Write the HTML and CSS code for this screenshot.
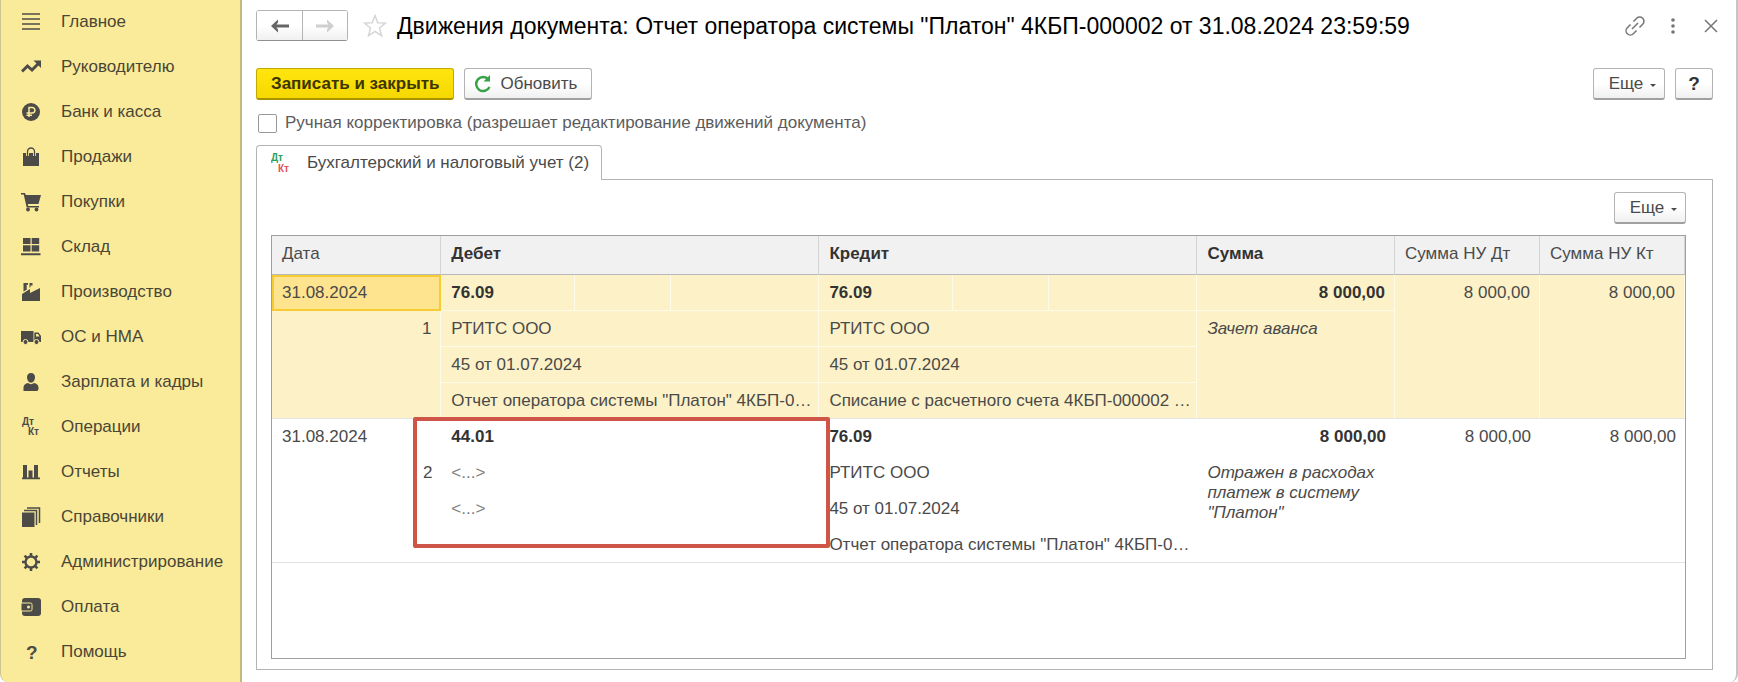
FILE: index.html
```html
<!DOCTYPE html>
<html lang="ru">
<head>
  <meta charset="UTF-8">
  <meta name="viewport" content="width=device-width, initial-scale=1.0">
  <title>Движения документа</title>
  <link rel="stylesheet" href="styles.css">
</head>
<body>

  <nav class="sidebar">
    <a href="#"><svg viewBox="0 0 20 20"><path d="M1 2h18M1 7h18M1 12h18M1 17h18" fill="none" stroke="currentColor" stroke-width="1.3"/></svg>Главное</a>
    <a href="#"><svg viewBox="0 0 20 20"><path d="M1 14.500l5.500-5.500 4.500 4 6-6" fill="none" stroke="currentColor" stroke-width="3"/><path d="M12.500 3.500H20V11z"/></svg>Руководителю</a>
    <a href="#"><svg viewBox="0 0 20 20"><circle cx="10" cy="10" r="9"/><path class="cut" d="M8 15V5.500h3.200a2.700 2.700 0 0 1 0 5.400H5.500M5.500 13.200H11"/></svg>Банк и касса</a>
    <a href="#"><svg viewBox="0 0 20 20"><path d="M2 6h16v13H2z"/><path d="M6.500 9V4.500a3.500 3.500 0 0 1 7 0V9" fill="none" stroke="#faeb9b" stroke-width="3"/><path d="M6.500 9V4.500a3.500 3.500 0 0 1 7 0V9" fill="none" stroke="currentColor" stroke-width="1.300"/></svg>Продажи</a>
    <a href="#"><svg viewBox="0 0 20 20"><path d="M0 1h4l.8 2H20l-2.500 9H6.800l.5 2H18v1.500H5.700L2.700 2.500H0z"/><circle cx="7" cy="17.500" r="1.900"/><circle cx="15.500" cy="17.500" r="1.900"/></svg>Покупки</a>
    <a href="#"><svg viewBox="0 0 20 20"><path d="M2 1h7.500v6H2zM10.700 1h7.500v6h-7.500zM2 8.300h7.500v6.200H2zM10.700 8.300h7.500v6.200h-7.500zM0 16.300h19.500v2H0z"/></svg>Склад</a>
    <a href="#"><svg viewBox="0 0 20 20"><path d="M1 12l8-5v4l10-5v13H1zM2.500 1H7v1.800H5.700v5L2.500 9.500zM8.500 1h3v2.500H9.500V5l-1 .8z"/></svg>Производство</a>
    <a href="#"><svg viewBox="0 0 20 20"><path d="M0 4h12.500v11H0z"/><path d="M13.300 5.500h4.200L20 9v6h-6.700z"/><path d="M15 7h2l1.500 2.500H15z" fill="#faeb9b"/><g stroke="#faeb9b"><circle cx="4.500" cy="15" r="2.500"/><circle cx="15.500" cy="15" r="2.500"/></g></svg>ОС и НМА</a>
    <a href="#"><svg viewBox="0 0 20 20"><path d="M10 1c2.600 0 4 1.900 4 4.300 0 3-1.700 5.400-4 5.400S6 8.300 6 5.300C6 2.900 7.400 1 10 1z"/><path d="M2.500 19v-3.500c0-2.500 2-4 4.500-4.500 1.500 1.500 4.500 1.500 6 0 2.500.5 4.500 2 4.500 4.500V17a2 2 0 0 1-2 2z"/></svg>Зарплата и кадры</a>
    <a href="#"><svg viewBox="0 0 20 20"><text x="1" y="8" class="mini">Дт</text><text x="7" y="18" class="mini">Кт</text></svg>Операции</a>
    <a href="#"><svg viewBox="0 0 20 20"><path d="M2 3h4v13H2zM7.500 8.500h4V16h-4zM13 3h4v13h-4zM1 15.500h18v1.800H1z"/></svg>Отчеты</a>
    <a href="#"><svg viewBox="0 0 20 20"><path d="M1 5.500h12.500V20H1z"/><path d="M3 3.500h12.500V18M6 1h12.500v15" fill="none" stroke="currentColor" stroke-width="1.500"/></svg>Справочники</a>
    <a href="#"><svg viewBox="0 0 20 20"><circle cx="10" cy="10" r="5.500" fill="none" stroke="currentColor" stroke-width="2.400"/><path d="M10 1v3M10 16v3M1 10h3M16 10h3M3.600 3.600l2.200 2.200M14.200 14.200l2.200 2.200M3.600 16.400l2.200-2.200M14.200 5.800l2.200-2.200" stroke="currentColor" stroke-width="2.600"/></svg>Администрирование</a>
    <a href="#"><svg viewBox="0 0 20 20"><rect x="1" y="1" width="19" height="18" rx="3"/><path d="M0 6h9.500a1.500 1.500 0 0 1 1.500 1.500v5A1.500 1.500 0 0 1 9.500 14H0z" stroke="#faeb9b"/><circle cx="7.500" cy="10" r="1.500" fill="#faeb9b"/></svg>Оплата</a>
    <a href="#"><svg viewBox="0 0 20 20"><text x="5" y="17" class="question">?</text></svg>Помощь</a>
  </nav>

  <main class="content">
    <header class="title-bar">
      <div class="history">
        <button type="button" aria-label="Назад"><svg viewBox="0 0 18 14"><path d="M0 7l7-6.500v3L5.500 5.500H18v3H5.500L7 10.500v3z"/></svg></button>
        <button type="button" aria-label="Вперед" disabled><svg viewBox="0 0 18 14"><path d="M18 7l-7-6.500v3l1.500 2H0v3h12.500l-1.500 2v3z"/></svg></button>
      </div>
      <button type="button" class="plain star" aria-label="В избранное"><svg viewBox="0 0 24 24"><path d="M12 1.500l2.800 7.300 7.700.3-6 4.900 2 7.700-6.500-4.300-6.500 4.300 2-7.700-6-4.900 7.700-.3z" fill="none" stroke="currentColor" stroke-width="1.500"/></svg></button>
      <h1>Движения документа: Отчет оператора системы "Платон" 4КБП-000002 от 31.08.2024 23:59:59</h1>
      <div class="window-tools">
        <button type="button" class="plain" aria-label="Ссылка"><svg viewBox="0 0 20 20"><path d="M8.500 5.500l3.200-3.200a4.200 4.200 0 0 1 6 6l-3.200 3.200M11.500 14.500l-3.200 3.200a4.200 4.200 0 0 1-6-6l3.200-3.200M7 13l6-6" fill="none" stroke="currentColor" stroke-width="1.500"/></svg></button>
        <button type="button" class="plain" aria-label="Меню"><svg viewBox="0 0 20 20"><circle cx="10" cy="4" r="1.800"/><circle cx="10" cy="10" r="1.800"/><circle cx="10" cy="16" r="1.800"/></svg></button>
        <button type="button" class="plain" aria-label="Закрыть"><svg viewBox="0 0 20 20"><path d="M4 4l12 12M16 4L4 16" stroke="currentColor" stroke-width="1.500"/></svg></button>
      </div>
    </header>

    <div class="toolbar">
      <button type="button" class="btn primary">Записать и закрыть</button>
      <button type="button" class="btn refresh"><svg viewBox="0 0 18 18"><path d="M14.500 4.500A7 7 0 1 0 15.500 12" fill="none" stroke="currentColor" stroke-width="2.400"/><path d="M9.500 6.500H16V0z"/></svg>Обновить</button>
      <span class="spacer"></span>
      <button type="button" class="btn more">Еще</button>
      <button type="button" class="btn help" aria-label="Справка">?</button>
    </div>

    <label class="manual"><input type="checkbox">Ручная корректировка (разрешает редактирование движений документа)</label>

    <div class="tabs" role="tablist">
      <button type="button" class="tab" role="tab" aria-selected="true"><svg viewBox="0 0 22 22"><text x="0" y="9" class="mini debit">Дт</text><text x="7" y="20" class="mini credit">Кт</text></svg>Бухгалтерский и налоговый учет (2)</button>
    </div>

    <section class="panel">
      <div class="panel-tools">
        <button type="button" class="btn more">Еще</button>
      </div>
      <div class="grid">
        <table>
          <colgroup>
            <col class="w-date">
            <col class="w-a"><col class="w-b"><col class="w-c">
            <col class="w-a"><col class="w-b"><col class="w-c">
            <col class="w-sum"><col class="w-tax"><col class="w-tax">
          </colgroup>
          <thead>
            <tr>
              <th>Дата</th>
              <th colspan="3" class="strong">Дебет</th>
              <th colspan="3" class="strong">Кредит</th>
              <th class="strong">Сумма</th>
              <th>Сумма НУ Дт</th>
              <th>Сумма НУ Кт</th>
            </tr>
          </thead>
          <tbody class="selected">
            <tr>
              <td class="current">31.08.2024</td>
              <td class="strong">76.09</td>
              <td></td>
              <td></td>
              <td class="strong">76.09</td>
              <td></td>
              <td></td>
              <td class="strong num">8 000,00</td>
              <td rowspan="4" class="num">8 000,00</td>
              <td rowspan="4" class="num">8 000,00</td>
            </tr>
            <tr>
              <td rowspan="3" class="num">1</td>
              <td colspan="3">РТИТС ООО</td>
              <td colspan="3">РТИТС ООО</td>
              <td rowspan="3" class="note">Зачет аванса</td>
            </tr>
            <tr>
              <td colspan="3">45 от 01.07.2024</td>
              <td colspan="3">45 от 01.07.2024</td>
            </tr>
            <tr>
              <td colspan="3">Отчет оператора системы "Платон" 4КБП-0…</td>
              <td colspan="3">Списание с расчетного счета 4КБП-000002 …</td>
            </tr>
          </tbody>
          <tbody class="regular">
            <tr>
              <td>31.08.2024</td>
              <td colspan="3" class="strong marked">44.01<span class="marker"></span></td>
              <td colspan="3" class="strong">76.09</td>
              <td class="strong num">8 000,00</td>
              <td rowspan="4" class="num">8 000,00</td>
              <td rowspan="4" class="num">8 000,00</td>
            </tr>
            <tr>
              <td rowspan="3" class="num">2</td>
              <td colspan="3" class="empty">&lt;...&gt;</td>
              <td colspan="3">РТИТС ООО</td>
              <td rowspan="3" class="note">Отражен в расходах платеж в систему "Платон"</td>
            </tr>
            <tr>
              <td colspan="3" class="empty">&lt;...&gt;</td>
              <td colspan="3">45 от 01.07.2024</td>
            </tr>
            <tr>
              <td colspan="3"></td>
              <td colspan="3">Отчет оператора системы "Платон" 4КБП-0…</td>
            </tr>
          </tbody>
        </table>
      </div>
    </section>
  </main>

</body>
</html>
```
FILE: styles.css
```css
* {
  box-sizing: border-box;
}
body {
  margin: 0;
  display: flex;
  min-height: 100vh;
  font-family: "Liberation Sans", Arial, sans-serif;
  font-size: 17px;
  line-height: 20px;
  color: #4a4a4a;
  background: #fff;
}
button {
  font: inherit;
  color: inherit;
  cursor: pointer;
}
svg {
  display: block;
  flex: none;
  fill: currentColor;
}

/* sections menu */
.sidebar {
  flex: none;
  width: 242px;
  background: #faeb9b;
  border-left: 1px solid #cfc68f;
  border-right: 2px solid #c3b97d;
  border-bottom-left-radius: 8px;
}
.sidebar a {
  display: flex;
  align-items: center;
  gap: 20px;
  height: 45px;
  padding: 0 0 2px 20px;
  color: #4a4636;
  text-decoration: none;
}
.sidebar svg {
  width: 20px;
  height: 20px;
  color: #4d4b48;
}
.cut {
  fill: none;
  stroke: #faeb9b;
  stroke-width: 1.5;
}
.mini {
  font-size: 10px;
  font-weight: bold;
}
.question {
  font-size: 19px;
  font-weight: bold;
}

/* document form */
.content {
  flex: 1;
  min-width: 0;
  display: flex;
  flex-direction: column;
  padding: 10px 23px 12px 14px;
  border-right: 2px solid #c4c4c4;
  border-bottom-right-radius: 8px;
}
.title-bar {
  display: flex;
  align-items: center;
  height: 31px;
}
.history {
  display: flex;
  border: 1px solid #b4b4b4;
  border-bottom-color: #8f8f8f;
  border-radius: 3px;
}
.history button {
  display: flex;
  align-items: center;
  justify-content: center;
  width: 45px;
  height: 29px;
  padding: 0;
  border: 0;
  color: #666;
  background: linear-gradient(#fff 50%, #f0f0f0);
}
.history button + button {
  border-left: 1px solid #b4b4b4;
}
.history button:disabled {
  color: #cfcfcf;
}
.history svg {
  width: 18px;
  height: 14px;
}
.plain {
  padding: 0;
  border: 0;
  background: none;
}
.star {
  margin: 0 10px 0 15px;
  color: #d6d6d6;
}
.star svg {
  width: 24px;
  height: 24px;
}
h1 {
  margin: 0;
  font-size: 23px;
  line-height: 28px;
  font-weight: normal;
  color: #000;
  white-space: nowrap;
}
.window-tools {
  display: flex;
  gap: 18px;
  margin-left: auto;
  margin-right: -8px;
  color: #757575;
}
.window-tools svg {
  width: 20px;
  height: 20px;
}
.toolbar {
  display: flex;
  gap: 10px;
  margin-top: 27px;
}
.spacer {
  flex: 1;
}
.btn {
  display: flex;
  align-items: center;
  justify-content: center;
  height: 32px;
  padding: 0 14px;
  border: 1px solid #b4b4b4;
  border-bottom: 2px solid #a0a0a0;
  border-radius: 3px;
  background: linear-gradient(#fff 50%, #f0f0f0);
}
.primary {
  font-weight: bold;
  color: #3d3500;
  border-color: #c4a900;
  border-bottom-color: #ab9300;
  background: linear-gradient(#ffe50f, #f5d800);
}
.refresh {
  gap: 8px;
  padding-left: 9px;
}
.refresh svg {
  width: 18px;
  height: 18px;
  color: #35a345;
}
.more {
  width: 72px;
  gap: 7px;
  padding-right: 7px;
}
.more::after {
  content: "";
  margin-top: 4px;
  border: 3px solid transparent;
  border-top-color: currentColor;
  border-bottom: 0;
}
.help {
  width: 38px;
  padding: 0;
  font-size: 19px;
  font-weight: bold;
  color: #333;
}
.manual {
  display: flex;
  align-items: center;
  gap: 8px;
  align-self: flex-start;
  margin-top: 13px;
  padding-left: 2px;
  color: #5c5c5c;
}
.manual input {
  appearance: none;
  width: 19px;
  height: 19px;
  margin: 0;
  border: 1px solid #999;
  border-radius: 2px;
  background: #fff;
}

/* tab overlaps the panel border */
.tabs {
  display: flex;
  margin-top: 12px;
  margin-bottom: -1px;
  z-index: 1;
}
.tab {
  display: flex;
  align-items: center;
  gap: 14px;
  height: 35px;
  padding: 0 12px 0 14px;
  border: 1px solid #b4b4b4;
  border-bottom: 0;
  border-radius: 4px 4px 0 0;
  background: #fff;
}
.tab svg {
  width: 22px;
  height: 22px;
}
.debit {
  fill: #2da05a;
}
.credit {
  fill: #e05555;
}
.panel {
  flex: 1;
  display: flex;
  flex-direction: column;
  padding: 12px 26px 10px 14px;
  border: 1px solid #b4b4b4;
}
.panel-tools {
  display: flex;
  justify-content: flex-end;
  margin-bottom: 11px;
}
.grid {
  flex: 1;
  border: 1px solid #a0a0a0;
}

/* postings */
table {
  width: 100%;
  table-layout: fixed;
  border-collapse: separate;
  border-spacing: 0;
}
.w-date {
  width: 12%;
}
.w-a {
  width: 134px;
}
.w-b {
  width: 96px;
}
.w-c {
  width: 148px;
}
.w-sum {
  width: 14%;
}
.w-tax {
  width: 145px;
}
th {
  height: 39px;
  padding: 0 10px 2px;
  text-align: left;
  font-weight: normal;
  background: #f1f1f1;
  border-right: 1px solid #d4d4d4;
  border-bottom: 1px solid #b8b8b8;
}
td {
  height: 36px;
  padding: 8px 10px 7px;
  line-height: 20px;
  vertical-align: top;
  white-space: nowrap;
  border-bottom: 1px solid transparent;
}
.strong {
  font-weight: bold;
  color: #333;
}
.num {
  padding-right: 9px;
  text-align: right;
}
.selected td {
  background: #fdf2c7;
  border-right: 1px solid #fffbea;
  border-bottom-color: #fffbea;
}
.selected .current {
  padding: 6px 8px;
  background: #ffe48f;
  border: 2px solid #f7cb34;
}
.note {
  font-style: italic;
  white-space: normal;
}
.empty {
  color: #808080;
}
.selected tr:last-child td,
.selected td[rowspan],
.regular tr:last-child td,
.regular td[rowspan] {
  border-bottom-color: #e2e2e2;
}
.marked {
  position: relative;
}
.marker {
  position: absolute;
  top: -2px;
  left: -28px;
  width: calc(100% + 39px);
  height: 131px;
  border: 4px solid #cf5548;
  border-radius: 2px;
  pointer-events: none;
}
```
